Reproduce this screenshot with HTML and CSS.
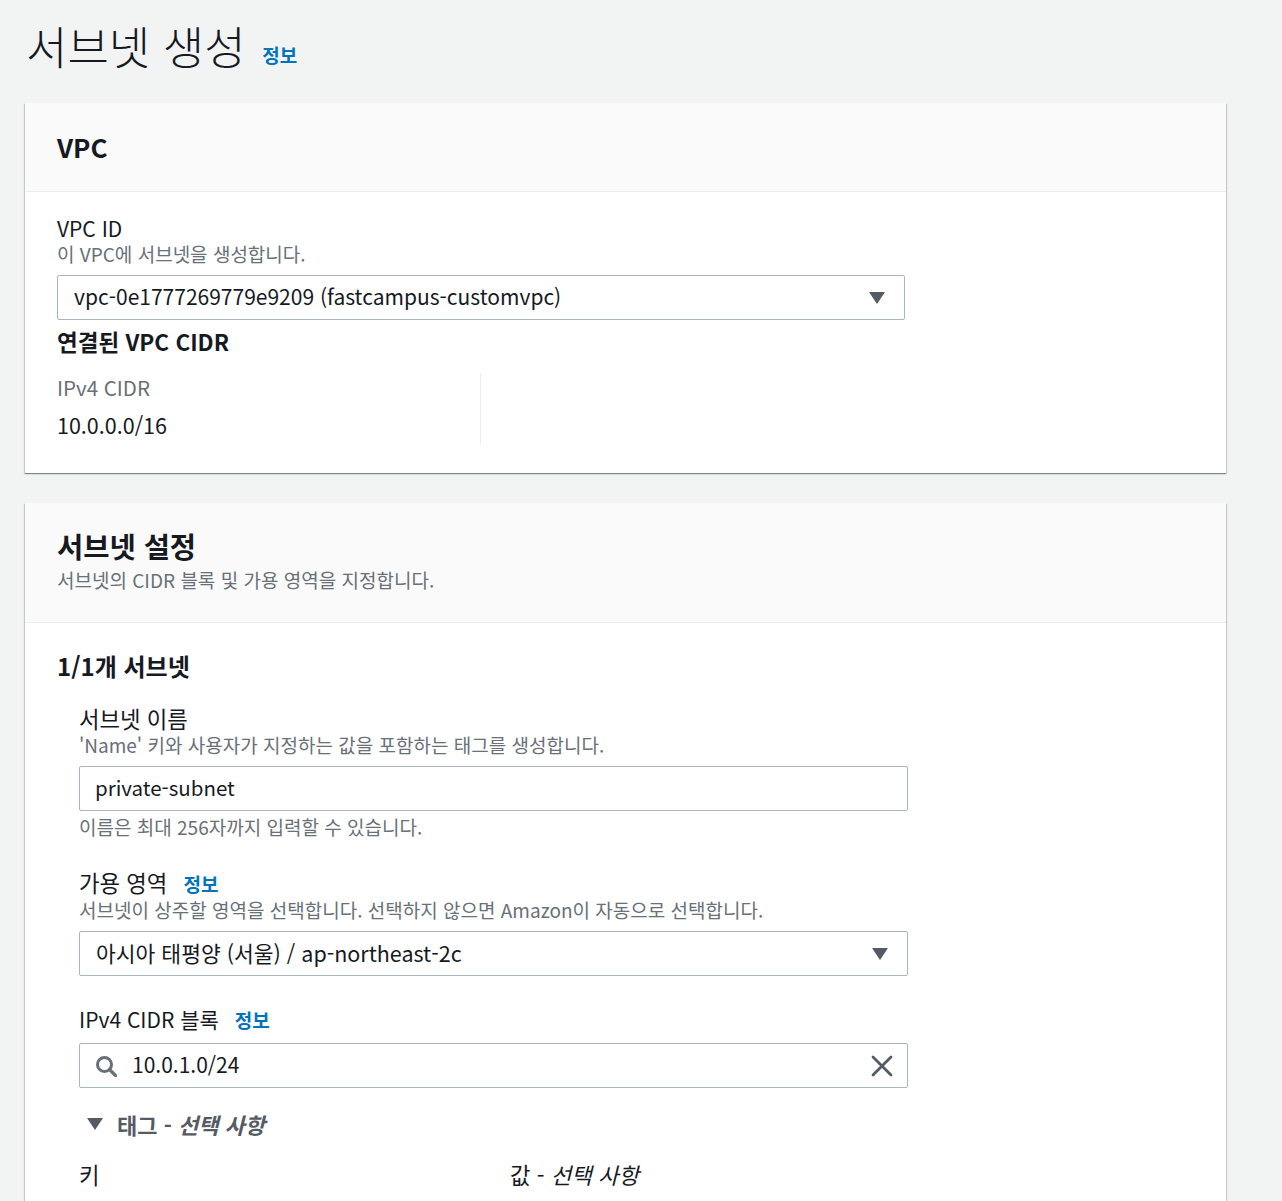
FILE: index.html
```html
<!DOCTYPE html>
<html lang="ko">
<head>
<meta charset="utf-8">
<title>서브넷 생성</title>
<link rel="stylesheet" href="styles.css">
</head>
<body>
<div class="page">
  <h1 class="title">서브넷 생성 <a class="info info-title" href="#">정보</a></h1>

  <section class="card">
    <header class="card-head card-head-vpc">
      <h2 class="card-title">VPC</h2>
    </header>
    <div class="card-body card-body-vpc">
      <div class="label">VPC ID</div>
      <div class="desc">이 VPC에 서브넷을 생성합니다.</div>
      <div class="select select-vpc">
        <span class="select-text">vpc-0e1777269779e9209 (fastcampus-customvpc)</span>
        <svg class="caret" viewBox="0 0 16 12" width="16" height="12"><path d="M0 0 H16 L8 12 Z" fill="#545b64"/></svg>
      </div>
      <h3 class="subhead subhead-cidr">연결된 VPC CIDR</h3>
      <div class="cols">
        <div class="col col-first">
          <div class="kv-key">IPv4 CIDR</div>
          <div class="kv-val">10.0.0.0/16</div>
        </div>
        <div class="col"></div>
      </div>
    </div>
  </section>

  <section class="card card-second">
    <header class="card-head card-head-subnet">
      <h2 class="card-title card-title-ko">서브넷 설정</h2>
      <div class="desc head-desc">서브넷의 CIDR 블록 및 가용 영역을 지정합니다.</div>
    </header>
    <div class="card-body card-body-subnet">
      <h3 class="subhead subhead-count">1/1개 서브넷</h3>
      <div class="subnet">
        <div class="field">
          <div class="label label-ko">서브넷 이름</div>
          <div class="desc">'Name' 키와 사용자가 지정하는 값을 포함하는 태그를 생성합니다.</div>
          <div class="input">private-subnet</div>
          <div class="desc hint">이름은 최대 256자까지 입력할 수 있습니다.</div>
        </div>
        <div class="field">
          <div class="label label-ko">가용 영역 <a class="info" href="#">정보</a></div>
          <div class="desc">서브넷이 상주할 영역을 선택합니다. 선택하지 않으면 Amazon이 자동으로 선택합니다.</div>
          <div class="select select-az">
            <span class="select-text">아시아 태평양 (서울) / ap-northeast-2c</span>
            <svg class="caret" viewBox="0 0 16 12" width="16" height="12"><path d="M0 0 H16 L8 12 Z" fill="#545b64"/></svg>
          </div>
        </div>
        <div class="field">
          <div class="label">IPv4 CIDR 블록 <a class="info" href="#">정보</a></div>
          <div class="input input-search">
            <svg class="search-icon" viewBox="0 0 22 22" width="22" height="22"><circle cx="9.5" cy="9.5" r="7" fill="none" stroke="#687078" stroke-width="3"/><path d="M14.5 14.5 L20.5 20.5" stroke="#687078" stroke-width="3.2" stroke-linecap="round"/></svg>
            <span class="search-text">10.0.1.0/24</span>
            <svg class="clear-icon" viewBox="0 0 22 22" width="22" height="22"><path d="M2 2 L20 20 M20 2 L2 20" stroke="#545b64" stroke-width="2.8" stroke-linecap="round"/></svg>
          </div>
        </div>
        <div class="tags-toggle">
          <svg class="tags-caret" viewBox="0 0 16 12" width="16" height="12"><path d="M0 0 H16 L8 12 Z" fill="#545b64"/></svg>
          <span>태그 - <em>선택 사항</em></span>
        </div>
        <div class="tag-grid">
          <div class="label label-ko">키</div>
          <div class="label label-ko">값 - <em>선택 사항</em></div>
        </div>
      </div>
    </div>
  </section>
</div>
</body>
</html>
```
FILE: styles.css
```css
* { box-sizing: border-box; }
html, body { margin: 0; padding: 0; }
body {
  background: #f2f3f3;
  color: #16191f;
  font-family: "Noto Sans CJK KR", "Noto Sans", sans-serif;
  width: 1282px;
  height: 1201px;
  overflow: hidden;
}
.page {
  padding: 21px 56px 0 25px;
}
.title {
  margin: 0 0 32px 1px;
  height: 50px;
  font-size: 45px;
  line-height: 50px;
  font-weight: 300;
  white-space: nowrap;
}
.info {
  color: #0073bb;
  font-weight: 700;
  font-size: 19px;
  text-decoration: none;
  margin-left: 10px;
}
.info-title { margin-left: 4px; vertical-align: 2px; }
.card {
  background: #fff;
  box-shadow: 0 1px 1px 0 rgba(0,28,36,.3), 1px 1px 1px 0 rgba(0,28,36,.15), -1px 1px 1px 0 rgba(0,28,36,.15);
}
.card-second { margin-top: 30px; }
.card-head {
  background: #fafafa;
  border-bottom: 1px solid #eaeded;
  padding: 0 32px;
}
.card-head-vpc { padding-top: 26px; padding-bottom: 26px; }
.card-head-subnet { padding-top: 25px; padding-bottom: 30px; }
.card-title {
  margin: 0;
  font-size: 26px;
  line-height: 36px;
  font-weight: 700;
}
.card-title-ko { font-size: 28.5px; }
.head-desc { margin-top: 4px; }
.card-body { padding: 23px 32px 29px 32px; }
.card-body-subnet { padding-top: 28px; }
.label {
  font-size: 21px;
  line-height: 27px;
  color: #16191f;
}
.label-ko { font-size: 22.3px; }
.desc {
  font-size: 19px;
  line-height: 24px;
  color: #687078;
}
.select, .input {
  height: 45px;
  border: 1px solid #aab7b8;
  border-radius: 2px;
  background: #fff;
  display: flex;
  align-items: center;
  font-size: 20.5px;
  color: #16191f;
  margin-top: 9px;
  padding-bottom: 3px;
}
.select { padding-left: 16px; padding-right: 19px; justify-content: space-between; }
.select .caret { margin-top: 3px; }
.select-vpc { width: 848px; font-size: 21px; }
.select-az { font-size: 21.5px; }
.input { padding-left: 15px; padding-right: 15px; }
.subhead {
  margin: 6px 0 0 0;
  font-size: 22.5px;
  line-height: 30px;
  font-weight: 700;
}
.subhead-count { margin-top: 0; font-size: 24px; }
.cols {
  width: 848px;
  display: grid;
  grid-template-columns: 1fr 1fr;
  margin-top: 17px;
}
.col-first { border-right: 1px solid #eaeded; padding-bottom: 5px; }
.kv-key {
  font-size: 20.5px;
  line-height: 28px;
  color: #687078;
}
.kv-val {
  font-size: 21.5px;
  line-height: 28px;
  margin-top: 10px;
}
.subnet {
  margin-left: 22px;
  width: 829px;
  padding-top: 24px;
}
.field .desc { margin-top: 1px; }
.field + .field { margin-top: 30px; }
.field .input, .field .select { margin-top: 9px; }
.field .hint { margin-top: 4px; margin-bottom: 1px; }
.field .input-search { margin-top: 10px; padding-right: 14px; font-size: 21px; }
.search-icon { flex: none; margin-top: 3px; }
.search-text { flex: 1; margin-left: 15px; }
.clear-icon { flex: none; margin-top: 3px; }
.tags-toggle {
  margin-top: 21px;
  margin-left: 8px;
  display: flex;
  align-items: center;
  font-size: 22px;
  line-height: 30px;
  font-weight: 700;
  color: #545b64;
}
.tags-caret { margin-right: 14px; }
.tag-grid {
  margin-top: 22px;
  display: grid;
  grid-template-columns: 431px 1fr;
}
```
